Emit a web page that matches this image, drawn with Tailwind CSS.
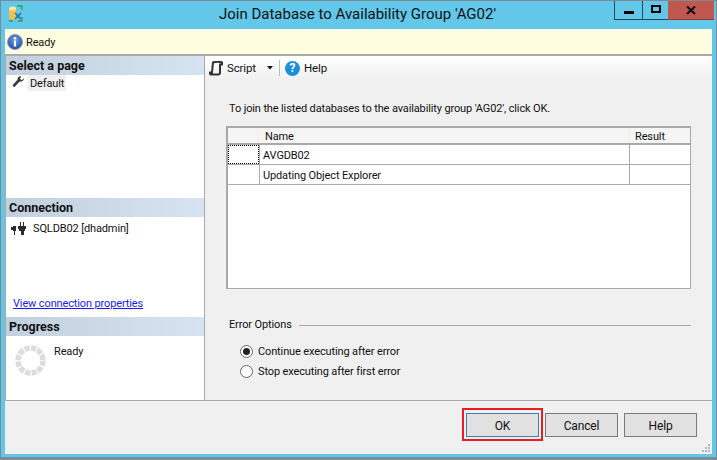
<!DOCTYPE html>
<html lang="en">
<head>
  <meta charset="UTF-8">
  <title>Join Database to Availability Group 'AG02'</title>
  <script src="https://cdn.jsdelivr.net/npm/@tailwindcss/browser@4"></script>
</head>
<body class="w-[717px] h-[460px] overflow-hidden font-['Roboto',sans-serif] text-[11px] tracking-[-0.13px] text-[#111]">
  <div class="w-[717px] h-[460px] flex flex-col bg-[#63c7e9] border-x-[1px] border-t-[1px] border-b-[3px] border-[#7f8a90]">
    <!-- title bar -->
    <div class="h-[28px] flex shrink-0 relative">
      <svg class="ml-[7px] mt-[4px]" width="16" height="17" viewBox="0 0 16 17">
        <path d="M1 4c0-3 7-3 7 0v9c0 2-7 2-7 0z" fill="#f2c14e"/>
        <ellipse cx="4.500" cy="3.500" rx="3.500" ry="2" fill="#fbe9a6"/>
        <path d="M9 1h5v4M1 16h4M14 12v4h-4" fill="none" stroke="#3f9b3f" stroke-width="1.300"/>
        <path d="M7 8l6 6M13 8l-6 6" stroke="#1f6fb0" stroke-width="1.500"/>
      </svg>
      <div class="absolute left-0 right-0 top-[3px] text-center text-[15px] tracking-normal leading-[20px] pr-[2px] text-[#111]">Join Database to Availability Group 'AG02'</div>
      <div class="absolute top-0 left-[613px] flex h-[19px]">
        <div class="w-[28px] border-l border-b border-[#1d4a5c] flex items-center justify-center"><div class="w-[10px] h-[3px] bg-black mt-[4px]"></div></div>
        <div class="w-[26px] border-l border-b border-[#1d4a5c] flex items-center justify-center"><div class="w-[10px] h-[8px] border-2 border-black mb-[3px]"></div></div>
        <div class="w-[46px] bg-[#c0584f] border-b border-[#8a3d38] flex items-center justify-center">
          <svg width="10" height="9" viewBox="0 0 10 9"><path d="M1 0.500l8 7.500M9 0.500l-8 7.500" stroke="#111" stroke-width="2.200"/></svg>
        </div>
      </div>
    </div>

    <div class="mx-[4px] w-[707px] h-[425px] flex flex-col bg-[#f0f0f0]">
      <!-- status -->
      <div class="h-[27px] shrink-0 bg-[#fefde0] border-b-2 border-[#a9a9a9] flex items-center pl-[2px] gap-[3px]">
        <svg width="16" height="16" viewBox="0 0 16 16">
          <defs><radialGradient id="info" cx="50%" cy="35%" r="65%"><stop offset="0" stop-color="#6f9be0"/><stop offset="1" stop-color="#1f4fa6"/></radialGradient></defs>
          <circle cx="8" cy="8" r="7.500" fill="url(#info)" stroke="#8c9cb8"/>
          <circle cx="8" cy="4.200" r="1.300" fill="#fff"/>
          <rect x="6.900" y="6.500" width="2.200" height="6" fill="#fff"/>
        </svg>
        <span class="pt-[3px]">Ready</span>
      </div>

      <div class="flex h-[345px] shrink-0 border-b border-[#a9a9a9]">
        <!-- left panel -->
        <div class="w-[200px] shrink-0 bg-white border-l border-r border-[#a9a9a9] flex flex-col">
          <div class="h-[19px] bg-gradient-to-r from-[#c2d0de] to-[#d6e3f0] pl-[3px] font-bold text-[12.5px] tracking-normal leading-[20px]">Select a page</div>
          <div class="h-[123px] flex items-start">
            <svg class="ml-[6px] mt-[1px]" width="13" height="13" viewBox="0 0 13 14">
              <path d="M12.500 2.500l-2.500 2-2-1.500 1.500-2.500c-2-.8-4.500.8-4 3.500l-5 5.500c-.8 1 1 3 2 2l5.200-5.500c2.800.8 4.800-1.500 4.800-3.500z" fill="#3a3a3a"/>
            </svg>
            <span class="ml-[3px] px-[2px] h-[16px] leading-[17px] bg-[#f0f0f0]">Default</span>
          </div>
          <div class="h-[19px] bg-gradient-to-r from-[#c2d0de] to-[#d6e3f0] pl-[3px] font-bold text-[12.5px] tracking-normal leading-[20px]">Connection</div>
          <div class="h-[100px] flex flex-col">
            <div class="flex items-center mt-[3px] h-[16px]">
              <svg class="ml-[5px]" width="16" height="13" viewBox="0 0 16 13">
                <path d="M0 5h2V4h3v5H2V8H0zM3 9h1v4H3zM7 4h8v3h-1v2h-1v4h-3V9H8V7H7zM9 0h1v4H9zM12 0h1v4h-1z" fill="#2b2b2b"/>
              </svg>
              <span class="ml-[6px] pt-[2px]">SQLDB02 [dhadmin]</span>
            </div>
            <a href="#" class="mt-auto mb-[5px] ml-[7px] text-[#1a1aff] underline leading-[16px]">View connection properties</a>
          </div>
          <div class="h-[19px] bg-gradient-to-r from-[#c2d0de] to-[#d6e3f0] pl-[3px] font-bold text-[12.5px] tracking-normal leading-[20px]">Progress</div>
          <div class="flex-1 flex items-start">
            <svg class="ml-[9px] mt-[9px]" width="31" height="31" viewBox="0 0 31 31">
              <circle cx="15.500" cy="15.500" r="12.500" fill="none" stroke="#dcdcdc" stroke-width="5.500" stroke-dasharray="5.300 1.250"/>
            </svg>
            <span class="ml-[8px] mt-[8px]">Ready</span>
          </div>
        </div>

        <!-- right panel -->
        <div class="flex-1 flex flex-col">
          <div class="h-[24px] bg-gradient-to-b from-white to-[#f0f0f0] flex items-center pl-[4px]">
            <svg width="14" height="15" viewBox="0 0 14 15">
              <path d="M4 1.500c1-1 8-1 9 0v2h-2v8c0 1-1 2-2 2H2c-1 0-1.500-1-1-2h2z" fill="none" stroke="#333" stroke-width="2"/>
            </svg>
            <span class="ml-[4px] pt-[2px] text-[11.500px]">Script</span>
            <svg class="ml-[11px]" width="6" height="4" viewBox="0 0 6 4"><path d="M0 0h6L3 3.500z" fill="#111"/></svg>
            <div class="w-px h-[16px] bg-[#bdbdbd] ml-[6px]"></div>
            <div class="ml-[5px] w-[15px] h-[15px] rounded-full bg-[#1b8fd8] text-white text-center font-bold text-[12px] leading-[15px]">?</div>
            <span class="ml-[4px] pt-[2px] text-[11.500px]">Help</span>
          </div>

          <p class="ml-[24px] mt-[20px] h-[20px] leading-[18px]">To join the listed databases to the availability group 'AG02', click OK.</p>

          <!-- grid -->
          <div class="ml-[21px] mt-[6px] w-[465px] h-[163px] bg-white border-2 border-[#a9a9a9] border-b border-r">
            <div class="flex h-[15px] border-b-2 border-[#a9a9a9] box-content">
              <div class="w-[31px] bg-[#f5f5f5] border-r-2 border-[#f0f0f0]"></div>
              <div class="w-[371px] pl-[6px] bg-[#f5f5f5] border-r-2 border-[#f0f0f0] leading-[17px]">Name</div>
              <div class="flex-1 pl-[5px] bg-[#f5f5f5] leading-[17px]">Result</div>
            </div>
            <div class="flex h-[19px] box-content border-b border-[#a9a9a9]">
              <div class="w-[31px] border border-dotted border-black"></div>
              <div class="w-[371px] pl-[3px] border-x border-[#a9a9a9] leading-[21px]">AVGDB02</div>
              <div class="flex-1"></div>
            </div>
            <div class="flex h-[19px] box-content border-b border-[#a9a9a9]">
              <div class="w-[31px]"></div>
              <div class="w-[371px] pl-[3px] border-x border-[#a9a9a9] leading-[21px]">Updating Object Explorer</div>
              <div class="flex-1"></div>
            </div>
          </div>

          <!-- error options -->
          <div class="ml-[24px] mr-[21px] mt-[28px] flex items-center h-[16px]">
            <span>Error Options</span>
            <div class="flex-1 h-px bg-[#a9a9a9] ml-[7px]"></div>
          </div>
          <div class="ml-[35px] mt-[8px] flex items-center h-[20px]">
            <span class="w-[13px] h-[13px] rounded-full border border-[#666] bg-white flex items-center justify-center"><span class="w-[7px] h-[7px] rounded-full bg-[#222]"></span></span>
            <span class="ml-[5px] pt-[2px]">Continue executing after error</span>
          </div>
          <div class="ml-[35px] flex items-center h-[20px]">
            <span class="w-[13px] h-[13px] rounded-full border border-[#666] bg-white"></span>
            <span class="ml-[5px] pt-[2px]">Stop executing after first error</span>
          </div>
        </div>
      </div>

      <!-- footer -->
      <div class="flex-1 relative flex justify-end items-start pt-[12px] pr-[15px] gap-[6px]">
        <div class="relative">
          <div class="absolute -left-[4px] -top-[5px] w-[81px] h-[33px] border-2 border-[#ed1c24]"></div>
          <button class="block w-[73px] h-[24px] pt-[2px] text-[12px] bg-[#e1e1e1] border border-[#3c7fb1] text-center">OK</button>
        </div>
        <button class="w-[73px] h-[24px] pt-[2px] text-[12px] bg-[#e1e1e1] border border-[#7a7a7a] text-center">Cancel</button>
        <button class="w-[73px] h-[24px] pt-[2px] text-[12px] bg-[#e1e1e1] border border-[#7a7a7a] text-center">Help</button>
        <svg class="absolute right-[1px] bottom-[1px]" width="9" height="9" viewBox="0 0 9 9">
          <path d="M6 0h2v2H6zM3 3h2v2H3zM6 3h2v2H6zM0 6h2v2H0zM3 6h2v2H3zM6 6h2v2H6z" fill="#b5b5b5"/>
        </svg>
      </div>
    </div>
  </div>
</body>
</html>
